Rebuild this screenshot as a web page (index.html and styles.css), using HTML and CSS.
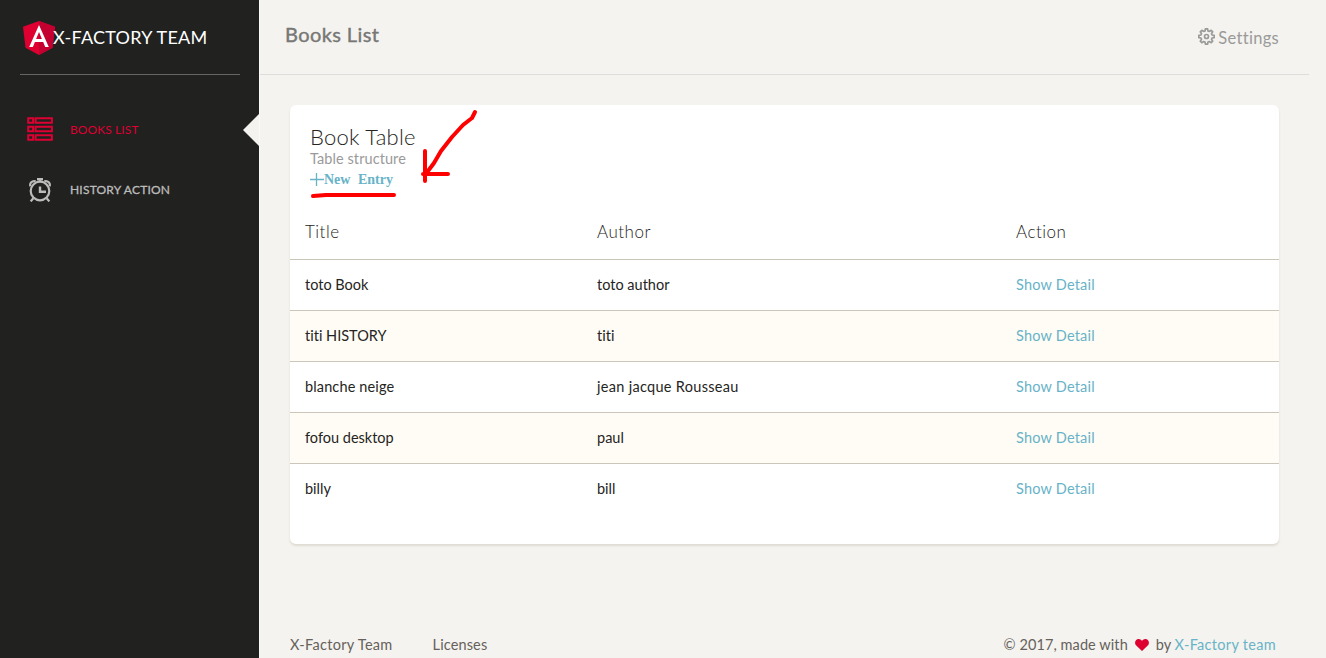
FILE: index.html
```html
<!DOCTYPE html>
<html lang="en">
<head>
<meta charset="utf-8">
<title>Books List</title>
<link rel="stylesheet" href="styles.css">
</head>
<body>
<div class="wrapper">
  <aside class="sidebar">
    <div class="brand">
      <svg class="brand-logo" width="32" height="34" viewBox="0 0 32 34">
        <path fill="#dd0031" d="M16 0 0 5.700l2.500 21.100L16 34l13.500-7.200L32 5.700z"/>
        <path fill="#c3002f" d="M16 0v34l13.500-7.200L32 5.700z"/>
        <path fill="#fff" fill-rule="evenodd" d="M16 4 6.200 26h3.700l2-4.900h8.300l2 4.900h3.600zM16 11l2.900 7h-5.800z"/>
      </svg>
      <span class="brand-name">X-FACTORY TEAM</span>
    </div>
    <nav class="menu">
      <a class="menu-item active">
        <svg class="menu-icon" width="26" height="24" viewBox="0 0 26 24" fill="none" stroke="currentColor" stroke-width="2">
          <path d="M1.200 1.200h4.900v4.600H1.200zM8.600 1.200h16.300v4.600H8.600zM1.200 9.700h4.900v4.600H1.200zM8.600 9.700h16.300v4.600H8.600zM1.200 18.200h4.900v4.600H1.200zM8.600 18.200h16.300v4.600H8.600z"/>
        </svg>
        <span class="menu-text">BOOKS LIST</span>
      </a>
      <a class="menu-item">
        <svg class="menu-icon" width="26" height="24" viewBox="0 0 26 24" fill="none" stroke="currentColor" stroke-width="2.200">
          <circle cx="13" cy="13" r="9.300"/>
          <path d="M13 8.500v5.300h6" stroke-width="2.400"/>
          <path d="M10 1.200h6M13 1v3" stroke-width="2.400"/>
          <path d="M3.500 8.200C2.300 5.500 5 2.200 8.700 3.400M22.500 8.200c1.200-2.700-1.500-6-5.200-4.800M6.300 20.200l-2.600 3.200M19.700 20.200l2.600 3.200"/>
        </svg>
        <span class="menu-text history">HISTORY ACTION</span>
      </a>
    </nav>
  </aside>

  <main class="main">
    <header class="topbar">
      <h1 class="page-title">Books List</h1>
      <a class="settings">
        <svg width="17" height="17" viewBox="0 0 17 17" fill="none" stroke="currentColor" stroke-width="1.700" stroke-linejoin="round">
          <path d="M7.400.8h2.200l.4 2.200 1.300.5 1.900-1.200 1.500 1.500-1.200 1.900.5 1.300 2.200.4v2.200l-2.200.4-.5 1.300 1.200 1.900-1.500 1.500-1.900-1.200-1.300.5-.4 2.200H7.400L7 14l-1.300-.5-1.900 1.200-1.500-1.500 1.200-1.900L3 10l-2.200-.4V7.400L3 7l.5-1.300-1.200-1.900 1.500-1.500 1.900 1.200L7 3z"/>
          <circle cx="8.500" cy="8.500" r="2"/>
        </svg>
        <span>Settings</span>
      </a>
    </header>

    <section class="card">
      <div class="card-head">
        <h2 class="card-title">Book Table</h2>
        <p class="card-sub">Table structure</p>
        <a class="new-entry"><svg width="14" height="14" viewBox="0 0 14 14" stroke="currentColor" stroke-width="1.300"><path d="M6.500 0v13M0 6.500h14"/></svg><span>New Entry</span></a>
      </div>
      <table class="books-table">
        <colgroup><col class="col-title"><col class="col-author"><col></colgroup>
        <thead><tr><th>Title</th><th>Author</th><th>Action</th></tr></thead>
        <tbody>
          <tr><td>toto Book</td><td>toto author</td><td><a>Show Detail</a></td></tr>
          <tr><td>titi HISTORY</td><td>titi</td><td><a>Show Detail</a></td></tr>
          <tr><td class="spaced">blanche neige</td><td class="full-name">jean jacque Rousseau</td><td><a>Show Detail</a></td></tr>
          <tr><td>fofou desktop</td><td>paul</td><td><a>Show Detail</a></td></tr>
          <tr><td>billy</td><td>bill</td><td><a>Show Detail</a></td></tr>
        </tbody>
      </table>
      <svg class="markup" width="180" height="100" viewBox="0 0 180 100" fill="none" stroke="#f00" stroke-width="4" stroke-linecap="round" stroke-linejoin="round">
        <path d="M23 91 36 90H104M185 7l-3 6-9 7-11 12-11 14-7 12-9 12M135 46v30M133 69h25"/>
      </svg>
    </section>

    <footer class="footer">
      <nav class="footer-links"><a class="team-link">X-Factory Team</a><a class="spaced">Licenses</a></nav>
      <div class="copyright">
        <span class="made">© 2017, made with</span>
        <svg width="14" height="12" viewBox="0 0 14 12"><path fill="#dd0031" d="M7 12 1 6.300C-.8 4.400 0 0 3.700 0 5.400 0 6.500 1 7 2c.500-1 1.600-2 3.300-2C14 0 14.800 4.400 13 6.300z"/></svg>
        <span>by <a class="team">X-Factory team</a></span>
      </div>
    </footer>
  </main>
</div>
</body>
</html>
```
FILE: styles.css
```css
* { box-sizing: border-box; }
body {
  margin: 0;
  background: #f4f3ef;
  color: #252422;
  font-family: Lato, "Noto Sans", sans-serif;
  font-size: 14.5px;
  font-variant-ligatures: none;
  overflow: hidden;
}
h1, h2, p { margin: 0; font-weight: 400; }
.wrapper { display: flex; height: 658px; }

.sidebar { width: 259px; flex: none; background: #212120; color: #fff; }
.brand {
  display: flex;
  align-items: center;
  height: 75px;
  margin: 0 19px 0 20px;
  padding-left: 3px;
  border-bottom: 1px solid #666;
}
.brand-logo { flex: none; margin: 2px -2px 0 0; }
.brand-name { font-size: 18px; line-height: 26px; letter-spacing: 0.27px; padding-bottom: 1px; }
.menu { display: flex; flex-direction: column; padding-top: 25px; }
.menu-item {
  position: relative;
  display: flex;
  align-items: center;
  gap: 17px;
  height: 60px;
  padding: 0 0 2px 27px;
  color: #bcbcbb;
}
.menu-item.active { color: #dd0031; }
.menu-item.active::after {
  content: "";
  position: absolute;
  right: 0;
  top: 14px;
  border: solid transparent;
  border-width: 16px 16px 16px 0;
  border-right-color: #f4f3ef;
}
.menu-icon { flex: none; }
.menu-item:not(.active) .menu-icon { margin-top: 2px; }
.menu-text { font-size: 12px; letter-spacing: 0.1px; }
.menu-text.history { letter-spacing: 0.2px; -webkit-text-stroke: 0.3px; }

.main { flex: 1; min-width: 0; display: flex; flex-direction: column; border-left: 1px solid #fbfaf8; }
.topbar {
  display: flex;
  justify-content: space-between;
  height: 75px;
  margin-right: 17px;
  padding: 0 30px 0 25px;
  border-bottom: 1px solid #dddddd;
}
.page-title { font-size: 20px; line-height: 30px; padding-top: 19px; letter-spacing: 0.4px; color: #777775; -webkit-text-stroke: 0.4px; }
.settings { display: flex; align-items: center; gap: 3px; padding-top: 1px; font-size: 16.5px; letter-spacing: 0.3px; color: #9a9a99; }
.settings svg { margin-bottom: 2px; }

.card {
  position: relative;
  height: 439px;
  margin: 30px 47px 0 30px;
  border-radius: 6px;
  background: #fff;
  box-shadow: 0 2px 2px rgba(204, 197, 185, 0.5);
}
.card-head { height: 100px; padding: 19px 20px 0; }
.card-title { font-size: 22px; line-height: 26px; font-weight: 300; letter-spacing: 0.25px; }
.card-sub { line-height: 17px; letter-spacing: 0.08px; color: #9a9a9a; }
.new-entry {
  display: flex;
  height: 26px;
  align-items: center;
  color: #68b3c8;
  font: bold 14px "Liberation Serif", serif;
  word-spacing: 4px;
}
.books-table { width: 100%; table-layout: fixed; border-collapse: collapse; }
.col-title { width: 292px; }
.col-author { width: 419px; }
.books-table th { height: 54px; padding: 0 15px; text-align: left; font-weight: 300; font-size: 17px; letter-spacing: 0.5px; }
.books-table td { height: 51px; padding: 0 15px; border-top: 1px solid #ccc5b9; }
.books-table tbody tr:nth-child(even) { background: #fffcf5; }
.books-table a, .team { color: #68b3c8; }
.books-table a { letter-spacing: 0.2px; }
.books-table .full-name { letter-spacing: 0.3px; }
.spaced { letter-spacing: 0.13px; }
.markup { position: absolute; left: 0; top: 0; overflow: visible; }

.footer { display: flex; justify-content: space-between; padding: 91px 50px 0 30px; line-height: 20px; color: #66615b; }
.footer-links { display: flex; gap: 40px; }
.team-link, .team { letter-spacing: 0.3px; }
.made { letter-spacing: 0.08px; }
.copyright { display: flex; align-items: center; gap: 7px; }
```
